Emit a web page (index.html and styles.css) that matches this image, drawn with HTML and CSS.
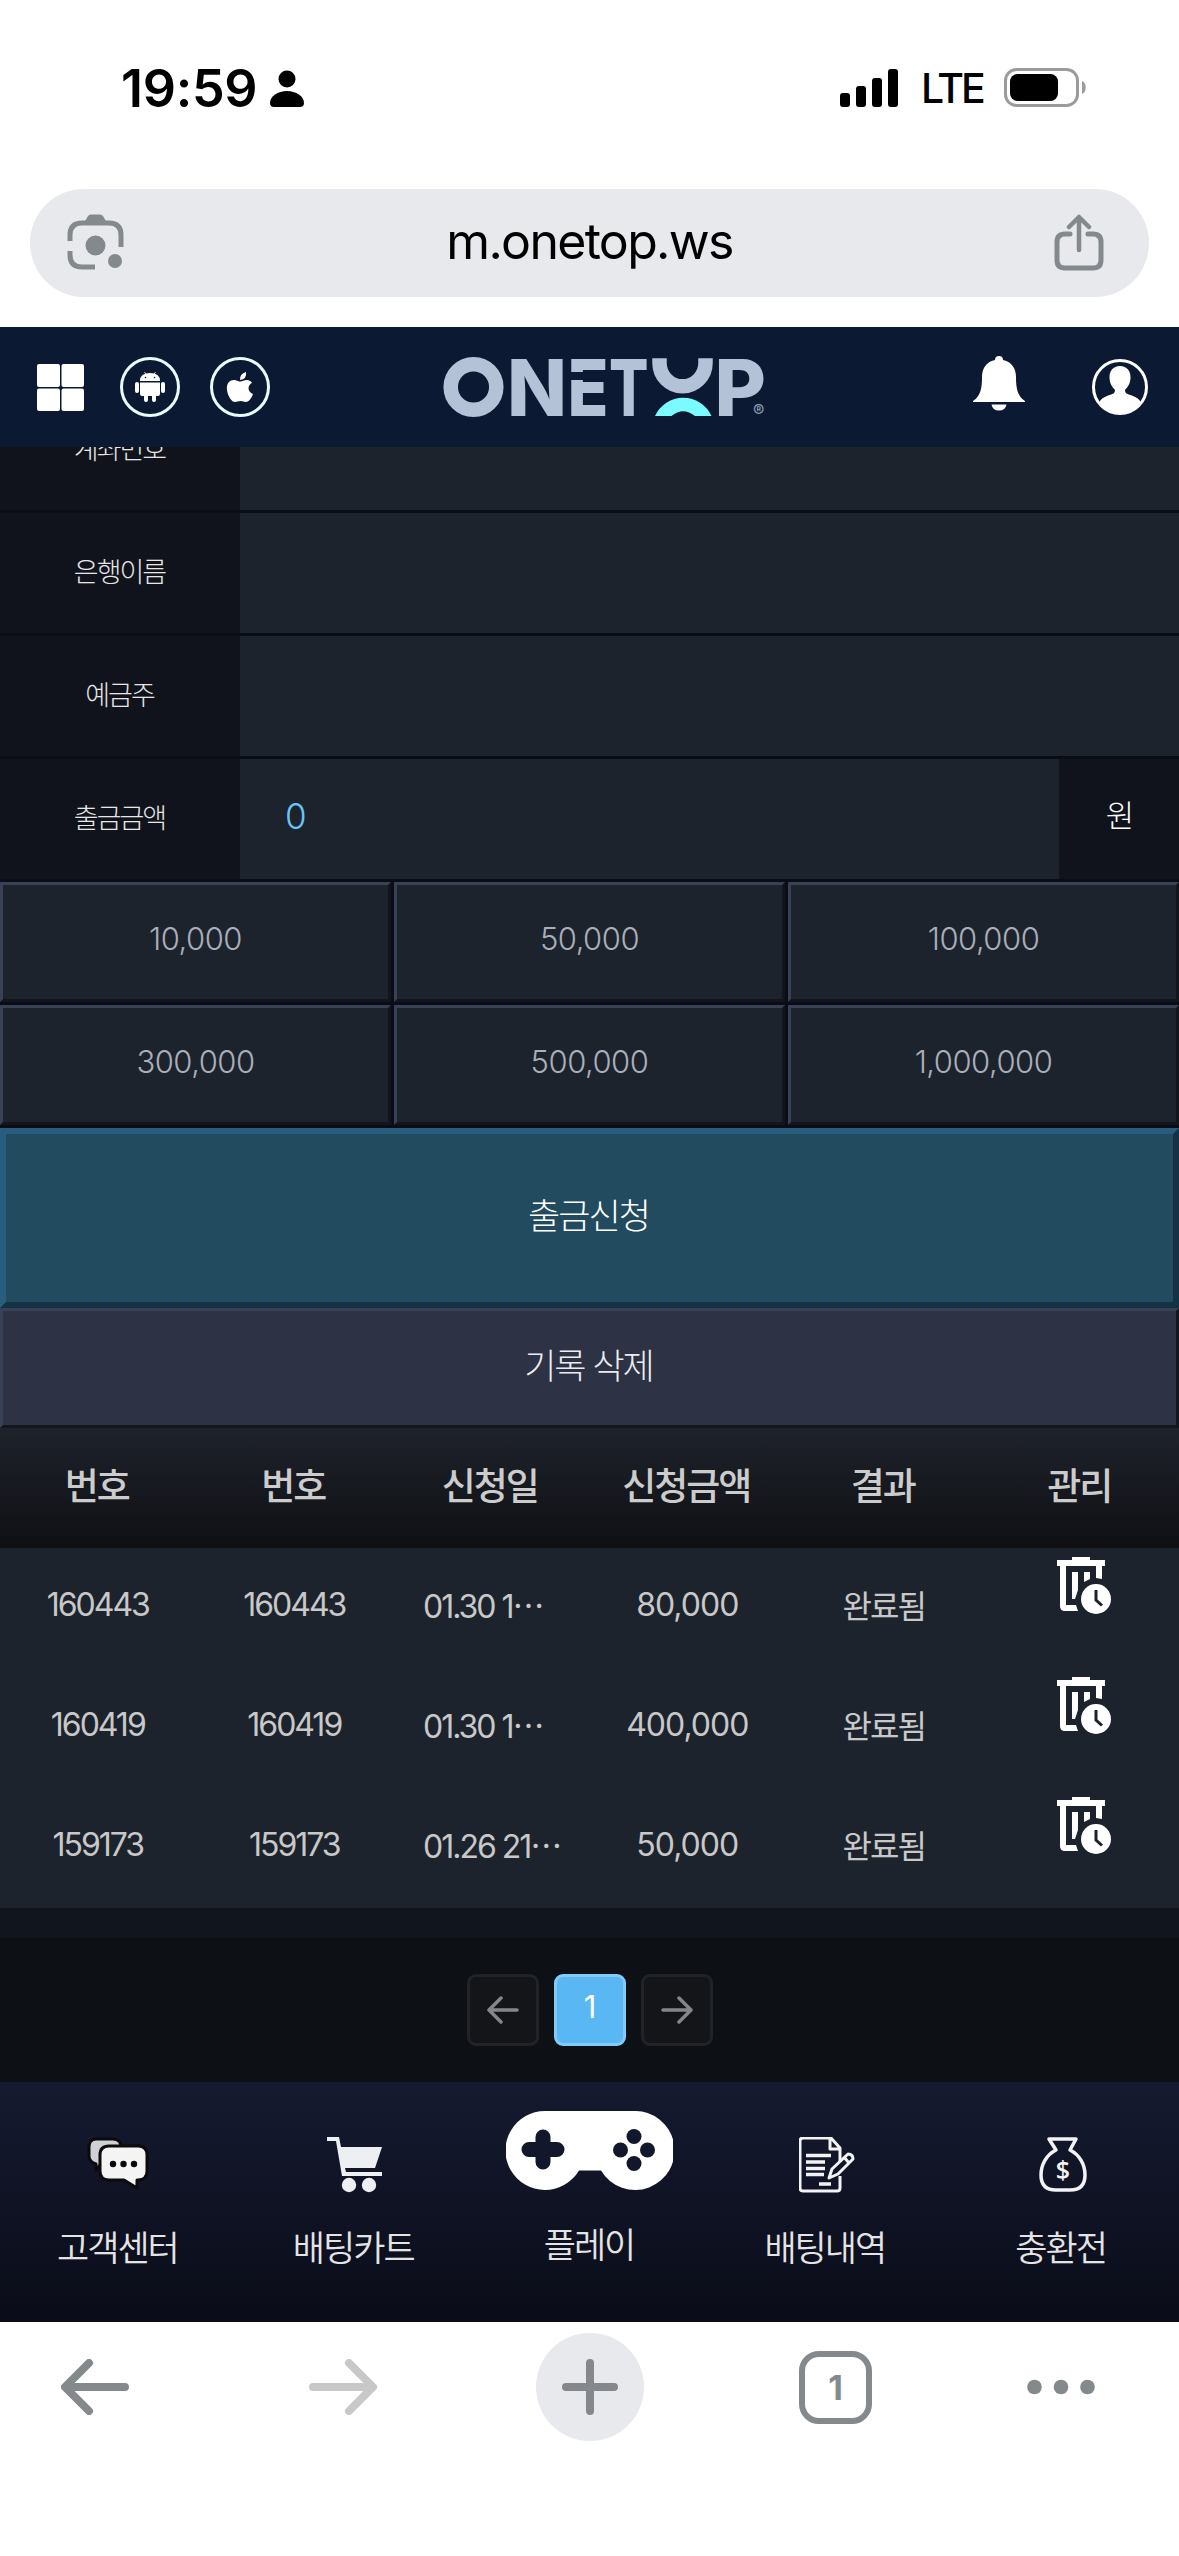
FILE: index.html
```html
<!DOCTYPE html>
<html lang="ko">
<head>
    <meta charset="UTF-8">
    <meta name="viewport" content="width=device-width, initial-scale=1.0">
    <title>ONETOP</title>
    <link rel="stylesheet" href="styles.css">
</head>
<body>

<div class="status-bar">
    <span class="time">19:59</span>
    <svg class="person" width="34" height="37" viewBox="0 0 34 37"><circle cx="17" cy="9" r="8.5"/><path d="M0 33C0 26 8 21 17 21s17 5 17 12c0 2.500-1.500 4-4 4H4c-2.500 0-4-1.500-4-4z"/></svg>
    <svg class="signal" width="59" height="38" viewBox="0 0 59 38"><rect x="0" y="24" width="10" height="14" rx="3"/><rect x="16" y="17" width="10" height="21" rx="3"/><rect x="32" y="9" width="10" height="29" rx="3"/><rect x="48" y="0" width="10" height="38" rx="3"/></svg>
    <span class="network">LTE</span>
    <svg class="battery" width="83" height="40" viewBox="0 0 83 40"><rect x="1.500" y="1.500" width="72" height="36" rx="11" fill="none" stroke="#9b9b9b" stroke-width="3"/><rect x="6" y="6" width="48" height="27" rx="7.500"/><path d="M78 13c5 2 5 11 0 13z" fill="#9b9b9b"/></svg>
</div>

<div class="address-bar">
    <svg width="58" height="58" viewBox="0 0 58 58" fill="none" stroke="#84898e" stroke-width="5">
        <path d="M3 27V21q0-12 12-12H42q12 0 12 12V33"/>
        <path d="M3 37v4q0 12 12 12H28" stroke-linecap="butt"/>
        <path d="M17 9l4-7q1-1.500 3-1.500h9q2 0 3 1.500l4 7z" fill="#84898e" stroke="none"/>
        <circle cx="28.500" cy="31.500" r="10" fill="#84898e" stroke="none"/>
        <circle cx="48" cy="47" r="7" fill="#84898e" stroke="none"/>
    </svg>
    <span class="url">m.onetop.ws</span>
    <svg width="50" height="58" viewBox="0 0 50 58" fill="none" stroke="#84898e" stroke-width="5" stroke-linecap="round" stroke-linejoin="round">
        <path d="M16 20H11q-8 0-8 8V46q0 8 8 8H39q8 0 8-8V28q0-8-8-8H34"/>
        <path d="M25 36V4M15 13L25 3l10 10" stroke-width="4.500"/>
    </svg>
</div>

<div class="app">
    <div class="header">
        <svg class="menu" width="47" height="47" viewBox="0 0 47 47" fill="#fff"><rect width="23" height="23" rx="2"/><rect x="24.500" width="22.500" height="23" rx="2"/><rect y="24.500" width="23" height="22.500" rx="2"/><rect x="24.500" y="24.500" width="22.500" height="22.500" rx="2"/></svg>
        <svg class="android" width="60" height="60" viewBox="0 0 60 60" fill="#fff">
            <circle cx="30" cy="30" r="28.500" fill="none" stroke="#e8fbfd" stroke-width="3"/>
            <path d="M20 24q0-8 10-8t10 8zM20 25.500H40V37q0 2-2 2H36v4q0 2-2 2t-2-2V39H28v4q0 2-2 2t-2-2V39H22q-2 0-2-2z"/>
            <rect x="15" y="25" width="4" height="11" rx="2"/><rect x="41" y="25" width="4" height="11" rx="2"/>
            <path d="M24.500 15l2 3M35.500 15l-2 3" stroke="#fff" stroke-width=".8"/>
            <circle cx="25.500" cy="20.500" r=".8" fill="#0b1932"/><circle cx="34.500" cy="20.500" r=".8" fill="#0b1932"/>
        </svg>
        <svg class="apple" width="60" height="60" viewBox="0 0 60 60" fill="#fff">
            <circle cx="30" cy="30" r="28.500" fill="none" stroke="#e8fbfd" stroke-width="3"/>
            <path d="M36 15q1 7-6 8-.5-6 6-8zM30.500 24.500c2-.2 3.500-1.500 6-1.500 2.500 0 4.500 1.200 5.500 2.800-5 3-4.500 9 1 11.200-1.500 4-4 8-7 8-2.500 0-3-1-5.500-1s-3.500 1-5.500 1c-5 0-11-13.500-6.500-19.500C22 21.500 26 23 28 24q1.500.7 2.500.5z"/>
        </svg>
        <svg class="logo" width="326" height="62" viewBox="0 0 326 62">
            <g class="logo-text">
                <circle cx="30.500" cy="31" r="22.800" fill="none" stroke="#b3c2d7" stroke-width="14.500"/>
                <text x="64" y="60" textLength="60" lengthAdjust="spacingAndGlyphs">N</text>
                <text x="124.500" y="60" textLength="41" lengthAdjust="spacingAndGlyphs">E</text>
                <text x="166" y="60" textLength="39.500" lengthAdjust="spacingAndGlyphs">T</text>
                <text x="271.500" y="60" textLength="51.500" lengthAdjust="spacingAndGlyphs">P</text>
            </g>
            <rect x="126" y="16" width="38" height="8" fill="#0b1932"/>
            <path d="M216.500 2.300V7a23 23.300 0 0 0 46 0V2.300" fill="none" stroke="#b3c2d7" stroke-width="14.500"/>
            <path d="M212 60a31 31 0 0 1 56.500 0H252q-12-9.500-23.500 0z" fill="#79fbff"/>
            <text class="reg" x="310" y="61">®</text>
        </svg>
        <svg class="bell" width="54" height="55" viewBox="0 0 54 55" fill="#fff"><path d="M23 4q0-4 4-4t4 4c10 2 13 10 13 17 0 10 1 19 9 24v1H1v-1c8-5 9-14 9-24 0-7 3-15 13-17zM19.500 48.500h15q-1 6-7.500 6t-7.500-6z"/></svg>
        <svg class="user" width="56" height="56" viewBox="0 0 56 56" fill="#fff">
            <circle cx="28" cy="28" r="26.500" fill="none" stroke="#fff" stroke-width="3"/>
            <path d="M28 7c7 0 10.500 5 10.500 11 0 7-3 10-5.500 13 0 4 3 4 8 6 4 1.500 6 3 8 6.500C44 51 37 55 28 55S12 51 7 43.500C9 40 11 38.500 15 37c5-2 8-2 8-6-2.500-3-5.500-6-5.500-13C17.500 12 21 7 28 7z"/>
        </svg>
    </div>

    <div class="form">
        <div class="form-row first"><div class="label">계좌번호</div><div class="field"></div></div>
        <div class="form-row"><div class="label">은행이름</div><div class="field"></div></div>
        <div class="form-row"><div class="label">예금주</div><div class="field"></div></div>
        <div class="form-row"><div class="label">출금금액</div><div class="field">0</div><div class="unit">원</div></div>
    </div>

    <div class="amounts">
        <div class="amount">10,000</div>
        <div class="amount">50,000</div>
        <div class="amount">100,000</div>
        <div class="amount">300,000</div>
        <div class="amount">500,000</div>
        <div class="amount">1,000,000</div>
    </div>

    <div class="submit">출금신청</div>
    <div class="clear">기록 삭제</div>

    <div class="history">
        <div class="history-head">
            <span>번호</span><span>번호</span><span>신청일</span><span>신청금액</span><span>결과</span><span>관리</span>
        </div>
        <div class="history-row">
            <span>160443</span><span>160443</span><span class="date">01.30 1<i>…</i></span><span class="money">80,000</span><span>완료됨</span>
            <svg class="trash"><use href="#trash"/></svg>
        </div>
        <div class="history-row">
            <span>160419</span><span>160419</span><span class="date">01.30 1<i>…</i></span><span class="money">400,000</span><span>완료됨</span>
            <svg class="trash"><use href="#trash"/></svg>
        </div>
        <div class="history-row">
            <span>159173</span><span>159173</span><span class="date">01.26 21<i>…</i></span><span class="money">50,000</span><span>완료됨</span>
            <svg class="trash"><use href="#trash"/></svg>
        </div>
    </div>

    <div class="strip"></div>

    <div class="pagination">
        <div class="page"><svg width="32" height="28" viewBox="0 0 32 28"><path d="M30 14H2M14 2L2 14l12 12"/></svg></div>
        <div class="page active">1</div>
        <div class="page"><svg width="32" height="28" viewBox="0 0 32 28"><path d="M2 14H30M18 2l12 12-12 12"/></svg></div>
    </div>

    <div class="nav">
        <div class="nav-item">
            <svg width="62" height="54" viewBox="0 0 62 54" stroke="#0b0b0b" stroke-width="3" stroke-linejoin="round">
                <path d="M9 2H26q8 0 8 8v9q0 8-8 8H14l-5 6V27q-7-2-7-8V10q0-8 7-8z" fill="#d0d1d4"/>
                <path d="M22 9H51q9 0 9 9V34q0 9-9 9H50v8L37 43H22q-9 0-9-9V18q0-9 9-9z" fill="#f4f4f5"/>
                <g fill="#0b0b0b" stroke="none"><circle cx="26" cy="27" r="3.200"/><circle cx="36.500" cy="27" r="3.200"/><circle cx="47" cy="27" r="3.200"/></g>
            </svg>
            <span>고객센터</span>
        </div>
        <div class="nav-item">
            <svg class="nudge" width="56" height="56" viewBox="0 0 56 56" fill="#eeeff3">
                <path d="M0 0H12L14 10H55L48 31H18l1 4H55v4H15L9 4H0z"/>
                <circle cx="22" cy="48" r="7.200"/><circle cx="42" cy="48" r="7.200"/>
            </svg>
            <span>배팅카트</span>
        </div>
        <div class="nav-item play">
            <svg width="167" height="79" viewBox="0 0 167 79">
                <path d="M39 0H128a39.500 39.500 0 1 1-33 59.500H73A39.500 39.500 0 1 1 39 0z" fill="#fff"/>
                <path d="M37 26V51M23 38.500H51" stroke="#12172b" stroke-width="15" stroke-linecap="round"/>
                <g fill="#12172b"><circle cx="128" cy="25.500" r="7.500"/><circle cx="128" cy="52.500" r="7.500"/><circle cx="114.500" cy="39" r="7.500"/><circle cx="141.500" cy="39" r="7.500"/></g>
            </svg>
            <span>플레이</span>
        </div>
        <div class="nav-item">
            <svg class="nudge" width="56" height="56" viewBox="0 0 56 56" fill="none" stroke="#f3f3f6" stroke-width="3" stroke-linejoin="round">
                <path d="M41 39V51q0 3-3 3H4q-3 0-3-3V4q0-3 3-3H32l9 10V25M31 2V12H41"/>
                <path d="M7 18.500H32M7 25H26M7 31.500H26M7 37.500H25M20 47H32" stroke-width="3.600"/>
                <path d="M30 41l3-9L49 17q5 0 5 5L39 37zM45 20l5 6"/>
            </svg>
            <span>배팅내역</span>
        </div>
        <div class="nav-item">
            <svg class="nudge" width="48" height="56" viewBox="0 0 48 56" fill="none" stroke="#f3f3f6" stroke-width="3.500" stroke-linejoin="round">
                <path d="M10 2H37L31 13C41 18 46 28 46 38q0 15-15 15H17Q2 53 2 38C2 28 7 18 17 13z"/>
                <text class="dollar" x="24" y="42" text-anchor="middle">$</text>
            </svg>
            <span>충환전</span>
        </div>
    </div>
</div>

<div class="toolbar">
    <svg width="68" height="56" viewBox="0 0 68 56" stroke="#84898c"><path d="M64 28H5M28 4L4 28l24 24"/></svg>
    <svg class="forward" width="68" height="56" viewBox="0 0 68 56" stroke="#c8c8c8"><path d="M4 28H63M40 4l24 24-24 24"/></svg>
    <div class="new-tab"><svg width="56" height="56" viewBox="0 0 56 56" stroke="#84878c"><path d="M28 4V52M4 28H52"/></svg></div>
    <div class="tabs">1</div>
    <svg class="more" width="68" height="56" viewBox="0 0 68 56" fill="#84898c" stroke="none"><circle cx="7.500" cy="28" r="7.300"/><circle cx="34" cy="28" r="7.300"/><circle cx="60.500" cy="28" r="7.300"/></svg>
</div>

<svg class="defs">
    <symbol id="trash" viewBox="0 0 54 58">
        <path d="M15 0H33V3H48V9H45V22L39 21V9H9V48H19l2 6H8q-5 0-5-5V9H0V3H15zM15 15h6V33l-3 9h-3zM27 15h6V22l-6 3z" fill="#fff"/>
        <circle cx="39" cy="42" r="15" fill="#fff"/>
        <path d="M39 33V43L45 48.500" fill="none" stroke="#1c232c" stroke-width="3"/>
    </symbol>
</svg>

</body>
</html>
```
FILE: styles.css
```css
* {
    box-sizing: border-box;
}

body {
    margin: 0;
    width: 1179px;
    height: 2556px;
    overflow: hidden;
    background-color: #fff;
    font-family: Inter, "Noto Sans CJK KR", sans-serif;
}

svg {
    display: block;
    flex-shrink: 0;
}

.defs {
    width: 0;
    height: 0;
}

/* phone status bar */
.status-bar {
    display: flex;
    align-items: center;
    height: 189px;
    padding: 0 92px 13px 121px;
}

.time {
    width: 149px;
    font-size: 52px;
    font-weight: 600;
    letter-spacing: -0.3px;
}

.signal {
    margin-left: auto;
}

.network {
    width: 57px;
    margin: 0 26px 0 22px;
    font-size: 41px;
    font-weight: 500;
    letter-spacing: -3px;
}

/* browser address bar */
.address-bar {
    display: flex;
    align-items: center;
    justify-content: space-between;
    height: 108px;
    margin: 0 30px 30px;
    padding: 0 45px 0 37px;
    border-radius: 54px;
    background-color: #e8e9ed;
}

.url {
    padding-bottom: 4px;
    font-size: 50px;
    letter-spacing: -1.7px;
}

.app {
    height: 1995px;
    background-color: #0a0c16;
    letter-spacing: -2px;
    overflow: hidden;
}

.header {
    display: flex;
    align-items: center;
    height: 120px;
    padding: 0 31px 0 37px;
    background-color: #0b1932;
}

.android {
    margin-left: 36px;
}

.apple {
    margin-left: 30px;
}

.logo {
    margin-left: 173px;
}

.logo-text {
    fill: #b3c2d7;
    font-size: 79px;
    font-weight: 800;
    letter-spacing: 0;
}

.reg {
    fill: #8f9db3;
    font-size: 17px;
    letter-spacing: 0;
}

.bell {
    margin-left: auto;
    margin-bottom: 8px;
}

.user {
    margin-left: 66px;
}

/* withdrawal form */
.form-row {
    display: flex;
    height: 123px;
    border-bottom: 3px solid #0a0c16;
}

.form-row.first {
    height: 66px;
    overflow: hidden;
    align-items: flex-end;
}

.form-row.first .label,
.form-row.first .field {
    height: 120px;
}

.label {
    display: flex;
    align-items: center;
    justify-content: center;
    flex: 0 0 240px;
    padding: 0 1px 5px 0;
    background-color: #10131b;
    color: #e6e6e6;
    font-size: 27px;
    font-weight: 300;
}

.field {
    display: flex;
    align-items: center;
    flex: 1;
    padding: 0 45px 6px;
    background-color: #1c232c;
    color: #6cc3f5;
    font-size: 35px;
    font-weight: 300;
}

.unit {
    display: flex;
    align-items: center;
    justify-content: center;
    width: 120px;
    padding-bottom: 12px;
    background-color: #10131b;
    color: #fff;
    font-size: 31px;
    font-weight: 300;
}

.amounts {
    display: grid;
    grid-template-columns: repeat(3, 1fr);
    grid-auto-rows: 120px;
    gap: 3px;
    padding-bottom: 3px;
}

.amount {
    display: flex;
    align-items: center;
    justify-content: center;
    padding-bottom: 8px;
    border: 3px solid;
    border-color: #394157 #13151c #13151c #394157;
    background-color: #1c232c;
    color: #a9aeba;
    font-size: 31px;
    font-weight: 300;
    letter-spacing: -0.5px;
}

.submit {
    display: flex;
    align-items: center;
    justify-content: center;
    height: 180px;
    padding: 0 2px 9px 0;
    border: 6px solid;
    border-color: #285d7d #143243 #143243 #285d7d;
    background-color: #224b60;
    color: #fff;
    font-size: 35px;
    font-weight: 300;
}

.clear {
    display: flex;
    align-items: center;
    justify-content: center;
    height: 120px;
    padding: 0 2px 9px 0;
    border: 3px solid;
    border-color: #394157 #14161f #14161f #394157;
    background-color: #2d3245;
    color: #ececee;
    font-size: 35px;
    font-weight: 300;
}

/* request history */
.history-head,
.history-row {
    display: grid;
    grid-template-columns: repeat(6, 1fr);
    align-items: center;
    height: 120px;
    padding-bottom: 8px;
    text-align: center;
}

.history-head span {
    padding-right: 3px;
}

.history-head {
    background: linear-gradient(#1e222b, #0f1014);
    color: #ccc;
    font-size: 37px;
    font-weight: 500;
}

.history-row {
    background-color: #1c232c;
    color: #c8c8c8;
    font-size: 32px;
}

.history-row span {
    padding-right: 1px;
}

.history-row .date {
    padding-left: 30px;
    text-align: left;
    white-space: nowrap;
}

.date i {
    font-family: "Noto Sans CJK KR", sans-serif;
    font-style: normal;
}

.money {
    letter-spacing: -1px;
}

.trash {
    width: 54px;
    height: 58px;
    margin: 0 0 37px 74px;
}

.strip {
    height: 30px;
    background-color: #10151e;
}

.pagination {
    display: flex;
    align-items: center;
    justify-content: center;
    gap: 15px;
    height: 144px;
    padding-left: 1px;
    background-color: #0d1116;
}

.page {
    display: flex;
    align-items: center;
    justify-content: center;
    width: 72px;
    height: 72px;
    border: 3px solid #212328;
    border-radius: 9px;
    background-color: #131519;
}

.page svg {
    fill: none;
    stroke: #85868a;
    stroke-width: 3.5;
    stroke-linecap: round;
    stroke-linejoin: round;
}

.page.active {
    padding: 0 2px 8px 0;
    border-color: #80cbfa;
    background-color: #59b8f3;
    color: #fff;
    font-size: 31px;
}

/* bottom navigation */
.nav {
    display: grid;
    grid-template-columns: repeat(5, 1fr);
    height: 240px;
    background: linear-gradient(#151a30, #0a0c18);
    color: #e4e4e4;
    font-size: 35px;
    font-weight: 350;
}

.nav-item {
    display: flex;
    flex-direction: column;
    align-items: center;
    padding-top: 55px;
}

.nav-item span {
    margin-top: auto;
    margin-bottom: 48px;
    padding-right: 1px;
    line-height: 52px;
}

.nudge {
    margin-left: 3px;
}

.play {
    padding-top: 29px;
}

.play span {
    margin-bottom: 51px;
}

.dollar {
    fill: #f3f3f6;
    stroke: none;
    font-family: "Open Sans", sans-serif;
    font-size: 25px;
    font-weight: 600;
    letter-spacing: 0;
}

/* browser toolbar */
.toolbar {
    display: flex;
    align-items: center;
    height: 130px;
    padding-left: 61px;
}

.toolbar svg {
    stroke-width: 8;
    stroke-linecap: round;
    stroke-linejoin: round;
}

.toolbar path {
    fill: none;
}

.forward {
    margin-left: 180px;
}

.new-tab {
    display: flex;
    align-items: center;
    justify-content: center;
    width: 108px;
    height: 108px;
    margin-left: 159px;
    border-radius: 50%;
    background-color: #e8e9ed;
}

.tabs {
    display: flex;
    align-items: center;
    justify-content: center;
    width: 73px;
    height: 73px;
    margin-left: 155px;
    border: 6px solid #84898c;
    border-radius: 20px;
    color: #84898c;
    font-size: 34px;
    font-weight: 700;
}

.more {
    margin-left: 155px;
}
```
